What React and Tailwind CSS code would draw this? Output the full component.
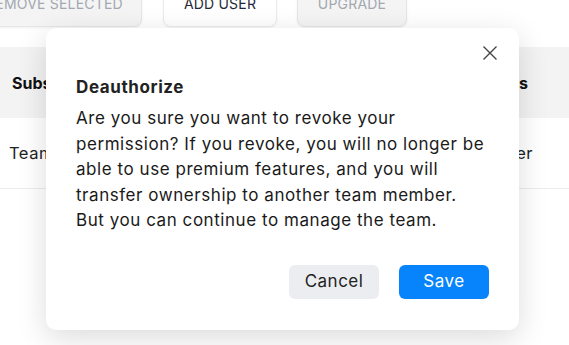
import React from "react";

export default function App() {
  const font = { fontFamily: "Inter, 'Noto Sans', sans-serif" };
  return (
    <div className="relative w-[569px] h-[345px] overflow-hidden bg-white" style={font}>
      {/* top action buttons */}
      <div className="flex -mt-[21px] -ml-[33px]">
        <div className="h-[48px] w-[175px] flex items-center justify-center rounded-[8px] border border-[#e6e6e6] bg-[#f4f4f4] text-[14px] tracking-[0.2px] text-[#a3a8b0] shadow-[0_1px_3px_rgba(0,0,0,0.06)]">
          REMOVE SELECTED
        </div>
        <div className="ml-[21px] h-[48px] w-[114px] flex items-center justify-center rounded-[8px] border border-[#ececec] bg-white text-[14px] tracking-[0.2px] text-[#1f2937] shadow-[0_1px_3px_rgba(0,0,0,0.05)]">
          ADD USER
        </div>
        <div className="ml-[20px] h-[48px] w-[110px] flex items-center justify-center rounded-[8px] border border-[#e6e6e6] bg-[#f4f4f4] text-[14px] tracking-[0.2px] text-[#a3a8b0] shadow-[0_1px_3px_rgba(0,0,0,0.06)]">
          UPGRADE
        </div>
      </div>

      {/* table */}
      <div className="mt-[20px]">
        <div className="h-[71px] bg-[#f3f3f3] flex items-center justify-between pl-[12px] pr-[41px] text-[16px] font-bold text-[#111]">
          <span>Subscription</span>
          <span>Status</span>
        </div>
        <div className="h-[71px] border-b border-[#ececec] flex items-center justify-between pl-[9px] pr-[36px] text-[16.5px] tracking-[0.5px] text-[#222]">
          <span>Team plan</span>
          <span>Owner</span>
        </div>
      </div>

      {/* modal */}
      <div className="absolute left-[46px] top-[28px] w-[473px] rounded-[10px] bg-white shadow-[0_8px_30px_rgba(0,0,0,0.14)] pt-[46px] px-[30px] pb-[31px]">
        <button className="absolute top-[18px] right-[22px] w-[14px] h-[14px]">
          <svg width="14" height="14" viewBox="0 0 14 14" fill="none">
            <path d="M0.5 0.5L13.5 13.5M13.5 0.5L0.5 13.5" stroke="#444" strokeWidth="1.4" />
          </svg>
        </button>
        <div className="text-[17px] leading-[26px] font-bold tracking-[0.6px] text-[#222]">Deauthorize</div>
        <div className="mt-[6px] text-[17px] leading-[25.6px] tracking-[0.55px] text-[#1a1a1a]">
          <div>Are you sure you want to revoke your</div>
          <div>permission? If you revoke, you will no longer be</div>
          <div>able to use premium features, and you will</div>
          <div>transfer ownership to another team member.</div>
          <div>But you can continue to manage the team.</div>
        </div>
        <div className="mt-[31px] flex justify-end gap-[20px]">
          <button className="w-[90px] h-[34px] rounded-[6px] bg-[#ebedf0] text-[17px] tracking-[0.5px] text-[#222]">Cancel</button>
          <button className="w-[90px] h-[34px] rounded-[6px] bg-[#0784fc] text-[17px] tracking-[0.5px] text-white">Save</button>
        </div>
      </div>
    </div>
  );
}
